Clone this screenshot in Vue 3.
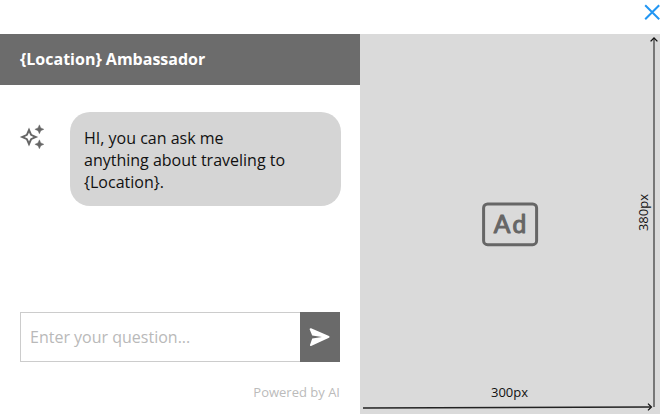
<script setup>
import { ref } from 'vue'

const question = ref('')
</script>

<template>
  <div class="widget">
    <div class="topbar">
      <button class="close" aria-label="Close">
        <svg width="16" height="16" viewBox="0 0 16 16">
          <path d="M1.2 1.2 15.2 15.2M15.2 1.2 1.2 15.2" fill="none" stroke="#2196f3" stroke-width="2" />
        </svg>
      </button>
    </div>
    <div class="content">
      <section class="chat">
        <header class="title">{Location} Ambassador</header>
        <div class="message">
          <svg class="sparkles" width="24" height="26" viewBox="0 0 24 26">
            <path d="M9 4.5 11.9 11.2 18.2 14 11.9 16.8 9 23.5 6.1 16.8-.2 14 6.1 11.2ZM9 9.4 7.6 12.6 4.5 14 7.6 15.4 9 18.6 10.4 15.4 13.5 14 10.4 12.6Z" fill="#666" fill-rule="evenodd" />
            <path d="M19.4 1.8 20.8 4.9 23.9 6.3 20.8 7.7 19.4 10.8 18 7.7 14.9 6.3 18 4.9ZM19.4 16.8 20.8 19.9 23.9 21.3 20.8 22.7 19.4 25.8 18 22.7 14.9 21.3 18 19.9Z" fill="#666" stroke="#666" stroke-width=".4" />
          </svg>
          <p class="bubble">HI, you can ask me<br>anything about traveling to<br>{Location}.</p>
        </div>
        <form class="ask" @submit.prevent>
          <input v-model="question" class="field" placeholder="Enter your question...">
          <button class="send" aria-label="Send">
            <svg width="22" height="20" viewBox="0 0 22 20">
              <path d="M2.1 1.2 20 8.9Q21.4 9.8 20 10.7L2.1 18.9Q.8 19.2 1 17.9L3.2 11.4 13 9.9 3.2 8.4.6 2.2Q.7 1 2.1 1.2Z" fill="#fff" />
            </svg>
          </button>
        </form>
        <footer class="powered">Powered by AI</footer>
      </section>
      <aside class="ad">
        <svg width="58" height="46" viewBox="0 0 58 46">
          <rect x="2.6" y="2.9" width="53" height="40.8" rx="4" fill="none" stroke="#666" stroke-width="3" />
          <text x="12.8" y="32" class="ad-label">Ad</text>
        </svg>
        <svg class="arrows" width="300" height="380" viewBox="0 0 300 380" fill="none">
          <path d="M294 4V373" stroke="#6c6c6c" stroke-width="1.8" />
          <path d="M290.6 7.4 294 4 297.4 7.4M288 369.6 291.4 373 288 376.4" stroke="#111" stroke-width="1.3" />
          <path d="M3 374 291 373" stroke="#222" stroke-width="1.3" />
        </svg>
        <span class="height-label">380px</span>
        <span class="width-label">300px</span>
      </aside>
    </div>
  </div>
</template>

<style>
body {
  margin: 0;
  background: #fff;
  overflow: hidden;
}
</style>

<style scoped>
.widget {
  width: 661px;
  height: 414px;
  display: flex;
  flex-direction: column;
  background: #fff;
  font-family: "Open Sans", sans-serif;
}
.topbar {
  height: 34px;
  display: flex;
  justify-content: flex-end;
  align-items: flex-start;
  padding: 4px 1px 0 0;
  box-sizing: border-box;
}
button {
  border: 0;
  padding: 0;
  background: none;
}
svg {
  display: block;
}
.content {
  display: flex;
  height: 380px;
}
.chat {
  width: 360px;
  display: flex;
  flex-direction: column;
}
.title {
  height: 51px;
  box-sizing: border-box;
  padding-left: 20px;
  background: #6c6c6c;
  color: #fff;
  font-size: 16px;
  font-weight: 700;
  line-height: 50px;
}
.message {
  display: flex;
  gap: 26px;
  padding: 27px 19px 0 20px;
}
.sparkles {
  margin-top: 11px;
  overflow: visible;
}
.bubble {
  margin: 0;
  width: 271px;
  height: 94px;
  box-sizing: border-box;
  padding: 15px 14px;
  border-radius: 20px;
  background: #d5d5d5;
  color: #111;
  font-size: 16px;
  line-height: 22px;
  white-space: nowrap;
}
.ask {
  display: flex;
  width: 320px;
  height: 50px;
  margin: 106px 0 0 20px;
}
.field {
  width: 280px;
  height: 50px;
  box-sizing: border-box;
  border: 1px solid #ccc;
  border-right: 0;
  border-radius: 0;
  padding: 0 9px;
  font: 16px "Open Sans", sans-serif;
  outline: none;
}
.field::placeholder {
  color: #b9b9b9;
  opacity: 1;
}
.send {
  width: 40px;
  height: 50px;
  display: flex;
  align-items: center;
  justify-content: center;
  background: #6a6a6a;
}
.powered {
  margin: 21px 20px 0 0;
  text-align: right;
  color: #bbb;
  font-size: 13px;
  line-height: 18px;
}
.ad {
  position: relative;
  width: 300px;
  height: 380px;
  display: flex;
  align-items: center;
  justify-content: center;
  background: #dadada;
  color: #111;
  font-size: 13px;
  line-height: 18px;
}
.ad-label {
  font: 400 24.5px Lato, sans-serif;
  letter-spacing: 2.4px;
  fill: #666;
  stroke: #666;
  stroke-width: 1.1;
  stroke-linejoin: round;
}
.arrows {
  position: absolute;
  inset: 0;
}
.height-label {
  position: absolute;
  right: 8px;
  top: 160px;
  writing-mode: vertical-rl;
  transform: rotate(180deg);
}
.width-label {
  position: absolute;
  left: 131px;
  bottom: 13px;
}
</style>
